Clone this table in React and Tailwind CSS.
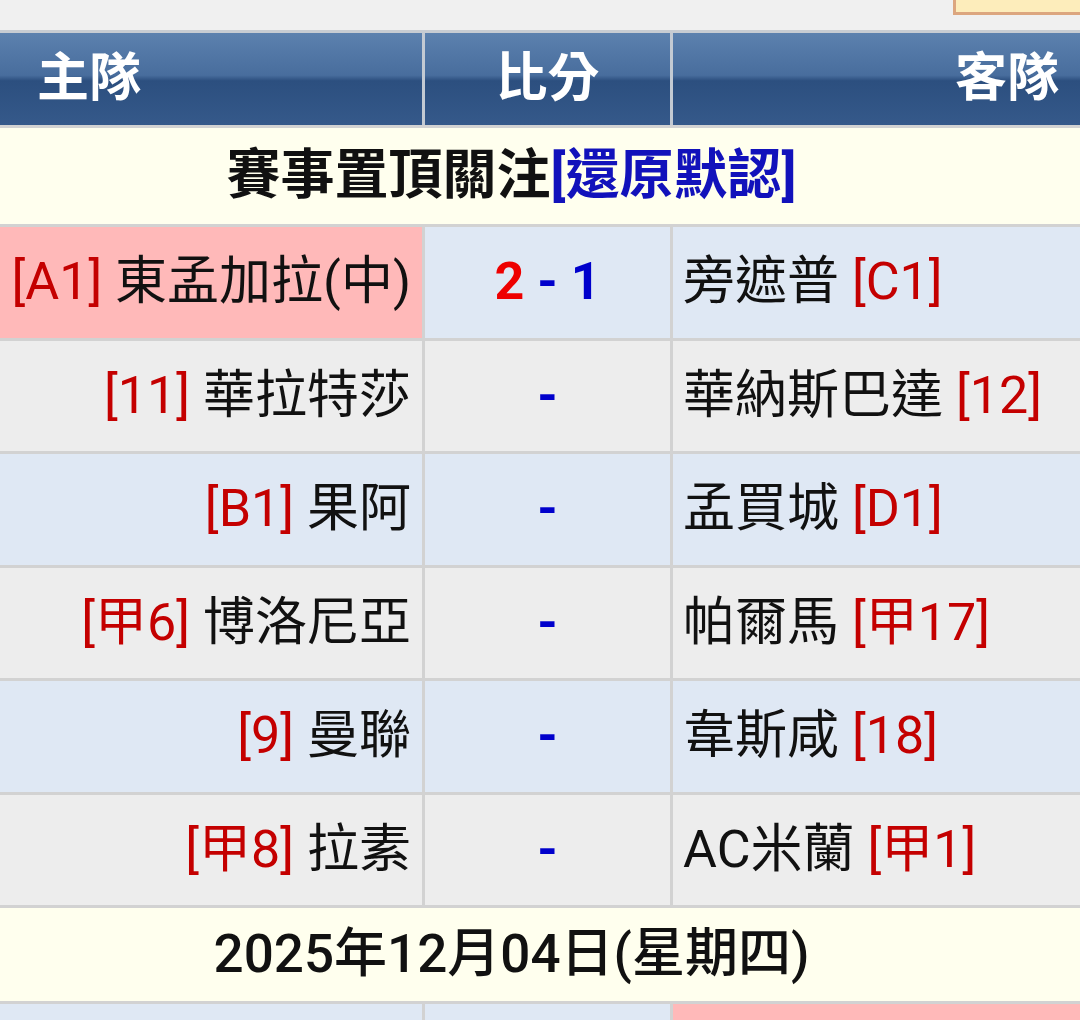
import React from "react";

const FONT = { fontFamily: "Roboto, 'Noto Sans CJK TC', sans-serif" };

const matches = [
  { home: "東孟加拉(中)", hr: "A1", away: "旁遮普", ar: "C1", score: [2, 1], tone: "blue", hot: true },
  { home: "華拉特莎", hr: "11", away: "華納斯巴達", ar: "12", tone: "gray" },
  { home: "果阿", hr: "B1", away: "孟買城", ar: "D1", tone: "blue" },
  { home: "博洛尼亞", hr: "甲6", away: "帕爾馬", ar: "甲17", tone: "gray" },
  { home: "曼聯", hr: "9", away: "韋斯咸", ar: "18", tone: "blue" },
  { home: "拉素", hr: "甲8", away: "AC米蘭", ar: "甲1", tone: "gray" },
];

const toneBg = {
  blue: "bg-[#dfe8f4]",
  gray: "bg-[#ededed]",
  pink: "bg-[#ffb9b9]",
};

const headBg = "bg-[linear-gradient(#5c81ae_0%,#486d9d_46%,#2c4f7f_52%,#35598a_100%)]";

function Rank({ children }) {
  return <span className="text-[#c40000]">[{children}]</span>;
}

function MatchRow({ m }) {
  const bg = toneBg[m.tone];
  return (
    <div className="grid grid-cols-[422px_245px_407px] gap-x-[3px] h-[110.5px]">
      <div
        className={`${m.hot ? toneBg.pink : bg} flex items-center justify-end pr-[11px] whitespace-pre`}
      >
        <Rank>{m.hr}</Rank>
        <span> </span>
        {m.home}
      </div>
      <div className={`${bg} flex items-center justify-center font-bold`}>
        {m.score ? (
          <span className="whitespace-pre">
            <span className="text-[#ee0000]">{m.score[0]}</span>
            <span className="text-[#0000cc]"> - {m.score[1]}</span>
          </span>
        ) : (
          <span className="text-[#0000cc]">-</span>
        )}
      </div>
      <div className={`${bg} flex items-center pl-[10px] whitespace-pre`}>
        {m.away}
        <span> </span>
        <Rank>{m.ar}</Rank>
      </div>
    </div>
  );
}

export default function App() {
  return (
    <div
      className="w-[1080px] h-[1020px] overflow-hidden bg-[#f0f0f0] text-[52px] leading-none text-[#111]"
      style={FONT}
    >
      {/* top strip */}
      <div className="h-[30px] flex justify-end">
        <div className="w-[127px] h-[15px] bg-[#fdedbb] border-l-[3px] border-b-[3px] border-[#dca67f]" />
      </div>

      <div className="flex flex-col gap-[3px] bg-[#d2d2d2] border-t-[3px] border-[#c7ccd2]">
        {/* header */}
        <div className="grid grid-cols-[422px_245px_407px] gap-x-[3px] bg-[#c3cad3] h-[92px] text-white font-semibold">
          <div className={`flex items-center pl-[37px] ${headBg}`}>主隊</div>
          <div className={`flex items-center justify-center ${headBg}`}>比分</div>
          <div className={`flex items-center justify-end pr-[21px] ${headBg}`}>客隊</div>
        </div>

        {/* pinned section */}
        <div className="h-[96px] bg-[#ffffee] flex items-center justify-center pr-[57px] font-bold text-[54px]">
          賽事置頂關注<span className="text-[#1212bb]">[還原默認]</span>
        </div>

        {matches.map((m, i) => (
          <MatchRow key={i} m={m} />
        ))}

        {/* date */}
        <div className="h-[93px] bg-[#ffffee] flex items-center justify-center pr-[57px] font-medium text-[53px]">
          2025年12月04日(星期四)
        </div>

        <div className="grid grid-cols-[422px_245px_407px] gap-x-[3px] h-[110.5px]">
          <div className="bg-[#dfe8f4]" />
          <div className="bg-[#dfe8f4]" />
          <div className="bg-[#ffb9b9]" />
        </div>
      </div>
    </div>
  );
}
